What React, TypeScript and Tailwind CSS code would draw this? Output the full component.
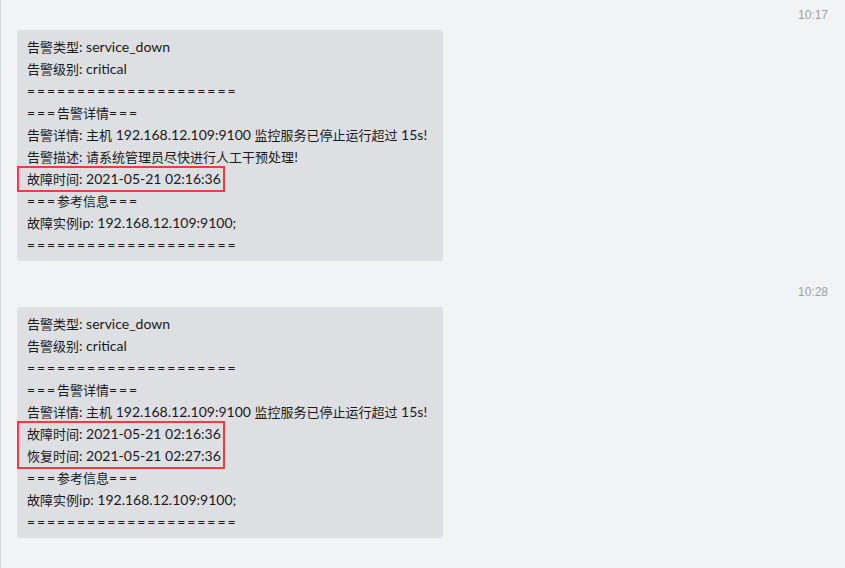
const SEP = "=====================";

type Msg = { time: string; lines: string[]; markFrom: number; markCount: number };

const MESSAGES: Msg[] = [
  {
    time: "10:17",
    markFrom: 6,
    markCount: 1,
    lines: [
      "告警类型: service_down",
      "告警级别: critical",
      SEP,
      "===告警详情===",
      "告警详情: 主机 192.168.12.109:9100 监控服务已停止运行超过 15s!",
      "告警描述: 请系统管理员尽快进行人工干预处理!",
      "故障时间: 2021-05-21 02:16:36",
      "===参考信息===",
      "故障实例ip: 192.168.12.109:9100;",
      SEP,
    ],
  },
  {
    time: "10:28",
    markFrom: 5,
    markCount: 2,
    lines: [
      "告警类型: service_down",
      "告警级别: critical",
      SEP,
      "===告警详情===",
      "告警详情: 主机 192.168.12.109:9100 监控服务已停止运行超过 15s!",
      "故障时间: 2021-05-21 02:16:36",
      "恢复时间: 2021-05-21 02:27:36",
      "===参考信息===",
      "故障实例ip: 192.168.12.109:9100;",
      SEP,
    ],
  },
];

// chinese runs are set a touch smaller than the latin text, "=" runs a bit wider, like the client does
function Text({ text }: { text: string }) {
  const parts = text.split(/([\u4e00-\u9fff]+|=+)/).filter(Boolean);
  return (
    <div className="whitespace-pre">
      {parts.map((p, i) => {
        if (/[\u4e00-\u9fff]/.test(p)) return <span key={i} className="text-[13px]">{p}</span>;
        if (p[0] === "=") return <span key={i} className="tracking-[1.9px]">{p}</span>;
        return <span key={i}>{p}</span>;
      })}
    </div>
  );
}

function Bubble({ lines, markFrom, markCount }: Omit<Msg, "time">) {
  const before = lines.slice(0, markFrom);
  const marked = lines.slice(markFrom, markFrom + markCount);
  const after = lines.slice(markFrom + markCount);
  return (
    <div className="w-[426px] rounded-[3px] bg-[#dedfe3] pl-[10px] pt-[6px] pb-[5px] text-[14px] leading-[22px] text-[#1a1a1a]">
      {before.map((l, i) => (
        <Text key={"b" + i} text={l} />
      ))}
      <div className="-ml-[10px] -my-[2px] w-[208px] border-2 border-[#f23c3c] pl-[8px]">
        {marked.map((l, i) => (
          <Text key={"m" + i} text={l} />
        ))}
      </div>
      {after.map((l, i) => (
        <Text key={"a" + i} text={l} />
      ))}
    </div>
  );
}

export default function App() {
  return (
    <div
      className="h-[568px] w-[845px] overflow-hidden border-l border-[#d6d7da] bg-[#f2f3f5] pl-[16px] pr-[17px]"
      style={{ fontFamily: 'Lato, "Noto Sans CJK SC", sans-serif' }}
    >
      {MESSAGES.map((m, i) => (
        <div key={m.time} className={i > 0 ? "mt-[16px]" : ""}>
          <div
            className="flex h-[30px] items-center justify-end text-[12px] text-[#9ba0a8]"
            style={{ fontFamily: '"Liberation Sans", Arial, sans-serif' }}
          >
            {m.time}
          </div>
          <Bubble lines={m.lines} markFrom={m.markFrom} markCount={m.markCount} />
        </div>
      ))}
    </div>
  );
}
